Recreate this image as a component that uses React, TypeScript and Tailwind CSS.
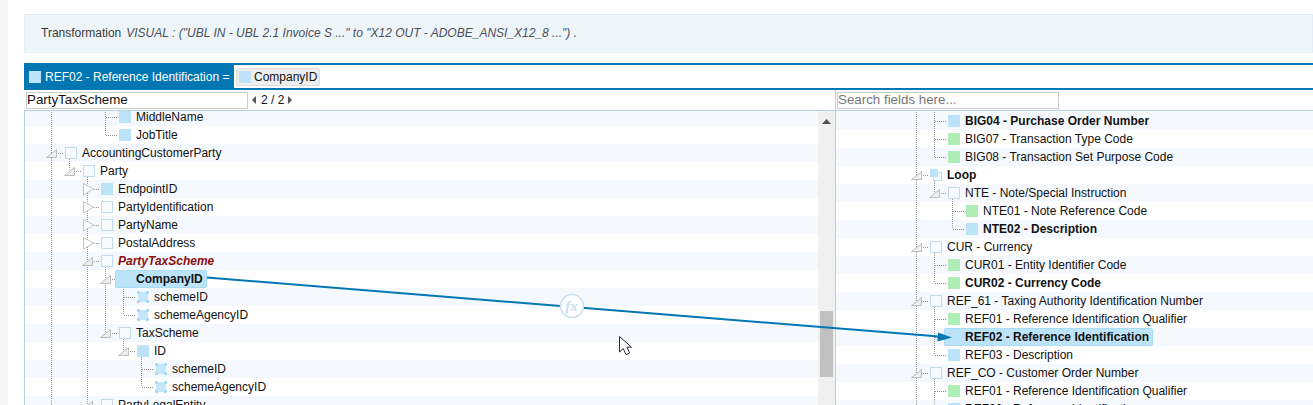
import type { ReactNode } from "react"

type Swatch = "blue" | "green" | "outline" | "attr" | "loop"
type Toggle = "open" | "closed" | "leaf"

type Row = {
  label: string
  depth: number
  swatch: Swatch
  toggle: Toggle
  bold?: boolean
  red?: boolean
  selected?: boolean
}

type Guide = [number, number, number]

const leftRows: Row[] = [
  { label: "MiddleName", depth: 3, swatch: "blue", toggle: "leaf" },
  { label: "JobTitle", depth: 3, swatch: "blue", toggle: "leaf" },
  { label: "AccountingCustomerParty", depth: 0, swatch: "outline", toggle: "open" },
  { label: "Party", depth: 1, swatch: "outline", toggle: "open" },
  { label: "EndpointID", depth: 2, swatch: "blue", toggle: "closed" },
  { label: "PartyIdentification", depth: 2, swatch: "outline", toggle: "closed" },
  { label: "PartyName", depth: 2, swatch: "outline", toggle: "closed" },
  { label: "PostalAddress", depth: 2, swatch: "outline", toggle: "closed" },
  { label: "PartyTaxScheme", depth: 2, swatch: "outline", toggle: "open", red: true },
  { label: "CompanyID", depth: 3, swatch: "blue", toggle: "open", bold: true, selected: true },
  { label: "schemeID", depth: 4, swatch: "attr", toggle: "leaf" },
  { label: "schemeAgencyID", depth: 4, swatch: "attr", toggle: "leaf" },
  { label: "TaxScheme", depth: 3, swatch: "outline", toggle: "open" },
  { label: "ID", depth: 4, swatch: "blue", toggle: "open" },
  { label: "schemeID", depth: 5, swatch: "attr", toggle: "leaf" },
  { label: "schemeAgencyID", depth: 5, swatch: "attr", toggle: "leaf" },
  { label: "PartyLegalEntity", depth: 2, swatch: "outline", toggle: "open" },
]

const rightRows: Row[] = [
  { label: "BIG04 - Purchase Order Number", depth: 1, swatch: "blue", toggle: "leaf", bold: true },
  { label: "BIG07 - Transaction Type Code", depth: 1, swatch: "green", toggle: "leaf" },
  { label: "BIG08 - Transaction Set Purpose Code", depth: 1, swatch: "green", toggle: "leaf" },
  { label: "Loop", depth: 0, swatch: "loop", toggle: "open", bold: true },
  { label: "NTE - Note/Special Instruction", depth: 1, swatch: "outline", toggle: "open" },
  { label: "NTE01 - Note Reference Code", depth: 2, swatch: "green", toggle: "leaf" },
  { label: "NTE02 - Description", depth: 2, swatch: "blue", toggle: "leaf", bold: true },
  { label: "CUR - Currency", depth: 0, swatch: "outline", toggle: "open" },
  { label: "CUR01 - Entity Identifier Code", depth: 1, swatch: "green", toggle: "leaf" },
  { label: "CUR02 - Currency Code", depth: 1, swatch: "green", toggle: "leaf", bold: true },
  { label: "REF_61 - Taxing Authority Identification Number", depth: 0, swatch: "outline", toggle: "open" },
  { label: "REF01 - Reference Identification Qualifier", depth: 1, swatch: "green", toggle: "leaf" },
  { label: "REF02 - Reference Identification", depth: 1, swatch: "blue", toggle: "leaf", bold: true, selected: true },
  { label: "REF03 - Description", depth: 1, swatch: "blue", toggle: "leaf" },
  { label: "REF_CO - Customer Order Number", depth: 0, swatch: "outline", toggle: "open" },
  { label: "REF01 - Reference Identification Qualifier", depth: 1, swatch: "green", toggle: "leaf" },
  { label: "REF02 - Reference Identification", depth: 1, swatch: "blue", toggle: "leaf" },
]

// x, y from, y to, measured from the top of each tree panel
const leftGuides: Guide[] = [
  [26.5, 0, 306],
  [80.5, 0, 27],
  [44.5, 45, 63],
  [62.5, 63, 306],
  [80.5, 153, 225],
  [98.5, 171, 207],
  [98.5, 225, 243],
  [116.5, 243, 279],
]

const rightGuides: Guide[] = [
  [80.5, 0, 293],
  [98.5, 0, 45],
  [98.5, 63, 81],
  [116.5, 81, 117],
  [98.5, 135, 171],
  [98.5, 189, 243],
  [98.5, 261, 293],
]

function SwatchIcon({ kind }: { kind: Swatch }) {
  if (kind === "blue") return <span className="block h-3 w-3 shrink-0 bg-[#bde3f9]" />
  if (kind === "green") return <span className="block h-3 w-3 shrink-0 bg-[#aeeeb6]" />
  if (kind === "outline")
    return <span className="block h-3 w-3 shrink-0 border border-[#c3dcec] bg-[#f8fbfe]" />
  if (kind === "attr")
    return (
      <svg width="12" height="12" className="shrink-0">
        <rect x="1" y="1" width="10" height="10" fill="#c6e6fa" />
        <rect x="0" y="0" width="3" height="3" fill="#a9dcf8" />
        <rect x="9" y="0" width="3" height="3" fill="#a9dcf8" />
        <rect x="0" y="9" width="3" height="3" fill="#a9dcf8" />
        <rect x="9" y="9" width="3" height="3" fill="#a9dcf8" />
      </svg>
    )
  return (
    <svg width="12" height="12" className="shrink-0">
      <rect x="3.5" y="3.5" width="8" height="8" fill="#f8fbfe" stroke="#c3dcec" />
      <rect x="0" y="0" width="8" height="8" fill="#bde3f9" />
    </svg>
  )
}

function ToggleIcon({ kind }: { kind: Toggle }) {
  return (
    <svg width="19" height="18" className="relative z-10 shrink-0">
      {kind === "leaf" && <line x1="6" y1="9.5" x2="17" y2="9.5" stroke="#8f8f8f" strokeDasharray="1 1" />}
      {kind === "open" && (
        <>
          <path d="M0.5 13.5 L10.5 13.5 L10.5 5.5 Z" fill="#eeeeee" stroke="#bdbdbd" />
          <line x1="12" y1="9.5" x2="17" y2="9.5" stroke="#8f8f8f" strokeDasharray="1 1" />
        </>
      )}
      {kind === "closed" && (
        <>
          <path d="M1.5 3.5 L11.5 9 L1.5 15 Z" fill="#ffffff" stroke="#c4c4c4" />
          <line x1="12" y1="9.5" x2="17" y2="9.5" stroke="#8f8f8f" strokeDasharray="1 1" />
        </>
      )}
    </svg>
  )
}

function TreeRow({ row, index, base }: { row: Row; index: number; base: number }) {
  const textClass = row.red
    ? "font-bold italic text-[#8b0f0f]"
    : row.bold
      ? "font-bold text-[#111]"
      : "text-[#111]"
  return (
    <div
      className={`flex h-[18px] shrink-0 items-center whitespace-nowrap ${
        index % 2 === 0 ? "bg-[#f5f9fd]" : "bg-white"
      }`}
      style={{ paddingLeft: base + row.depth * 18 }}
    >
      <ToggleIcon kind={row.toggle} />
      <div
        className={`relative z-10 flex h-[18px] items-center gap-[5px] ${
          row.selected ? "-ml-1 rounded-[2px] border border-[#a9dcf8] bg-[#bde3f9] pl-[3px] pr-[3px]" : ""
        }`}
      >
        <SwatchIcon kind={row.swatch} />
        <span className={`text-xs ${textClass}`}>{row.label}</span>
      </div>
    </div>
  )
}

function Guides({ lines }: { lines: Guide[] }) {
  return (
    <svg className="pointer-events-none absolute left-0 top-0 h-full w-full">
      {lines.map(([x, a, b]) => (
        <line key={`${x}-${a}`} x1={x} y1={a} x2={x} y2={b} stroke="#999999" strokeDasharray="1 1" />
      ))}
    </svg>
  )
}

function TreePanel({ children }: { children: ReactNode }) {
  return <div className="relative flex min-w-0 flex-1 flex-col overflow-hidden">{children}</div>
}

function Connector() {
  return (
    <svg className="pointer-events-none absolute left-0 top-0 z-20 h-[405px] w-[1313px]">
      <line x1="207" y1="277.5" x2="942" y2="336.8" stroke="#0077b3" strokeWidth="2" />
      <path d="M938 332.5 L952 337.4 L937.5 341.5 Z" fill="#0077b3" />
      <circle cx="572" cy="306" r="11.5" fill="#ffffff" stroke="#c6e0f0" strokeWidth="1.5" />
      <text
        x="571.5"
        y="311"
        textAnchor="middle"
        fontFamily="'Liberation Serif', serif"
        fontStyle="italic"
        fontWeight="700"
        fontSize="15"
        fill="#c6dfee"
      >
        fx
      </text>
      <path
        d="M619.5 336.5 L619.5 352 L623.3 348.6 L626 354.6 L629.6 353 L627 347.2 L631.5 347.2 Z"
        fill="#ffffff"
        stroke="#2b2b3a"
        strokeWidth="1"
      />
    </svg>
  )
}

export default function App() {
  return (
    <div className="relative flex h-[405px] w-[1313px] overflow-hidden bg-white font-['Liberation_Sans',Arial,sans-serif]">
      <div className="w-2 shrink-0 bg-[#f6f6f6]" />
      <div className="flex min-w-0 flex-1 flex-col pl-4 pt-[14px]">
        <div className="flex h-[39px] shrink-0 items-center gap-[5px] border border-[#e3edf3] bg-[#eef5f9] pb-[2px] pl-4 text-xs text-[#3a3a3a]">
          <span>Transformation</span>
          <span className="italic text-[#4a4f5a]">
            VISUAL : ("UBL IN - UBL 2.1 Invoice S ..." to "X12 OUT - ADOBE_ANSI_X12_8 ...") .
          </span>
        </div>

        <div className="mt-[10px] flex h-[27px] shrink-0 items-center bg-[#0077b3] pl-[5px] pr-0">
          <span className="block h-3 w-3 shrink-0 bg-[#bde3f9]" />
          <span className="ml-1 w-[189px] shrink-0 whitespace-nowrap text-xs text-white">
            REF02 - Reference Identification =
          </span>
          <div className="flex h-[23px] flex-1 items-center bg-white pl-[2px]">
            <div className="flex h-[18px] w-[84px] items-center gap-[3px] rounded-[2px] border border-[#dddddd] bg-[#eeeeee] pl-[2px]">
              <span className="block h-3 w-3 shrink-0 bg-[#bde3f9]" />
              <span className="text-xs text-[#111]">CompanyID</span>
            </div>
          </div>
        </div>

        <div className="flex h-[21px] shrink-0 border-b border-[#b2d2e4]">
          <div className="flex w-[812px] shrink-0 items-center border-r border-[#b2d2e4] pl-[2px]">
            <input
              readOnly
              value="PartyTaxScheme"
              className="h-[17px] w-[222px] border border-[#cccccc] bg-white px-0 text-[13.33px] text-[#111] outline-none"
            />
            <svg width="6" height="10" className="ml-[3px]">
              <path d="M5 1 L1 5 L5 9 Z" fill="#555555" />
            </svg>
            <span className="ml-[4px] text-xs text-[#111]">2 / 2</span>
            <svg width="6" height="10" className="ml-[3px]">
              <path d="M1 1 L5 5 L1 9 Z" fill="#555555" />
            </svg>
          </div>
          <div className="flex items-center pl-[1px]">
            <input
              readOnly
              placeholder="Search fields here..."
              className="h-[17px] w-[222px] border border-[#cccccc] bg-white px-0 text-[13.33px] outline-none placeholder:text-[#777777]"
            />
          </div>
        </div>

        <div className="flex min-h-0 flex-1">
          <div className="flex w-[794px] shrink-0 border-l border-[#b2d2e4]">
            <TreePanel>
              <div className="relative -mt-[3px] flex flex-col">
                {leftRows.map((row, i) => (
                  <TreeRow key={`${row.label}-${i}`} row={row} index={i} base={21} />
                ))}
                <Guides lines={leftGuides} />
              </div>
            </TreePanel>
          </div>
          <div className="flex w-[18px] shrink-0 justify-center border-r border-[#b2d2e4] bg-[#f0f0f0]">
            <div className="flex h-full w-[13px] flex-col items-center">
              <svg width="9" height="5" className="mt-[8px] shrink-0">
                <path d="M0 5 L4.5 0 L9 5 Z" fill="#505050" />
              </svg>
              <div className="mt-[187px] h-[66px] w-[13px] shrink-0 bg-[#c0c0c0]" />
            </div>
          </div>
          <TreePanel>
            <div className="relative mt-[1px] flex flex-col">
              {rightRows.map((row, i) => (
                <TreeRow key={`${row.label}-${i}`} row={row} index={i} base={75} />
              ))}
              <Guides lines={rightGuides} />
            </div>
          </TreePanel>
        </div>
      </div>
      <Connector />
    </div>
  )
}
